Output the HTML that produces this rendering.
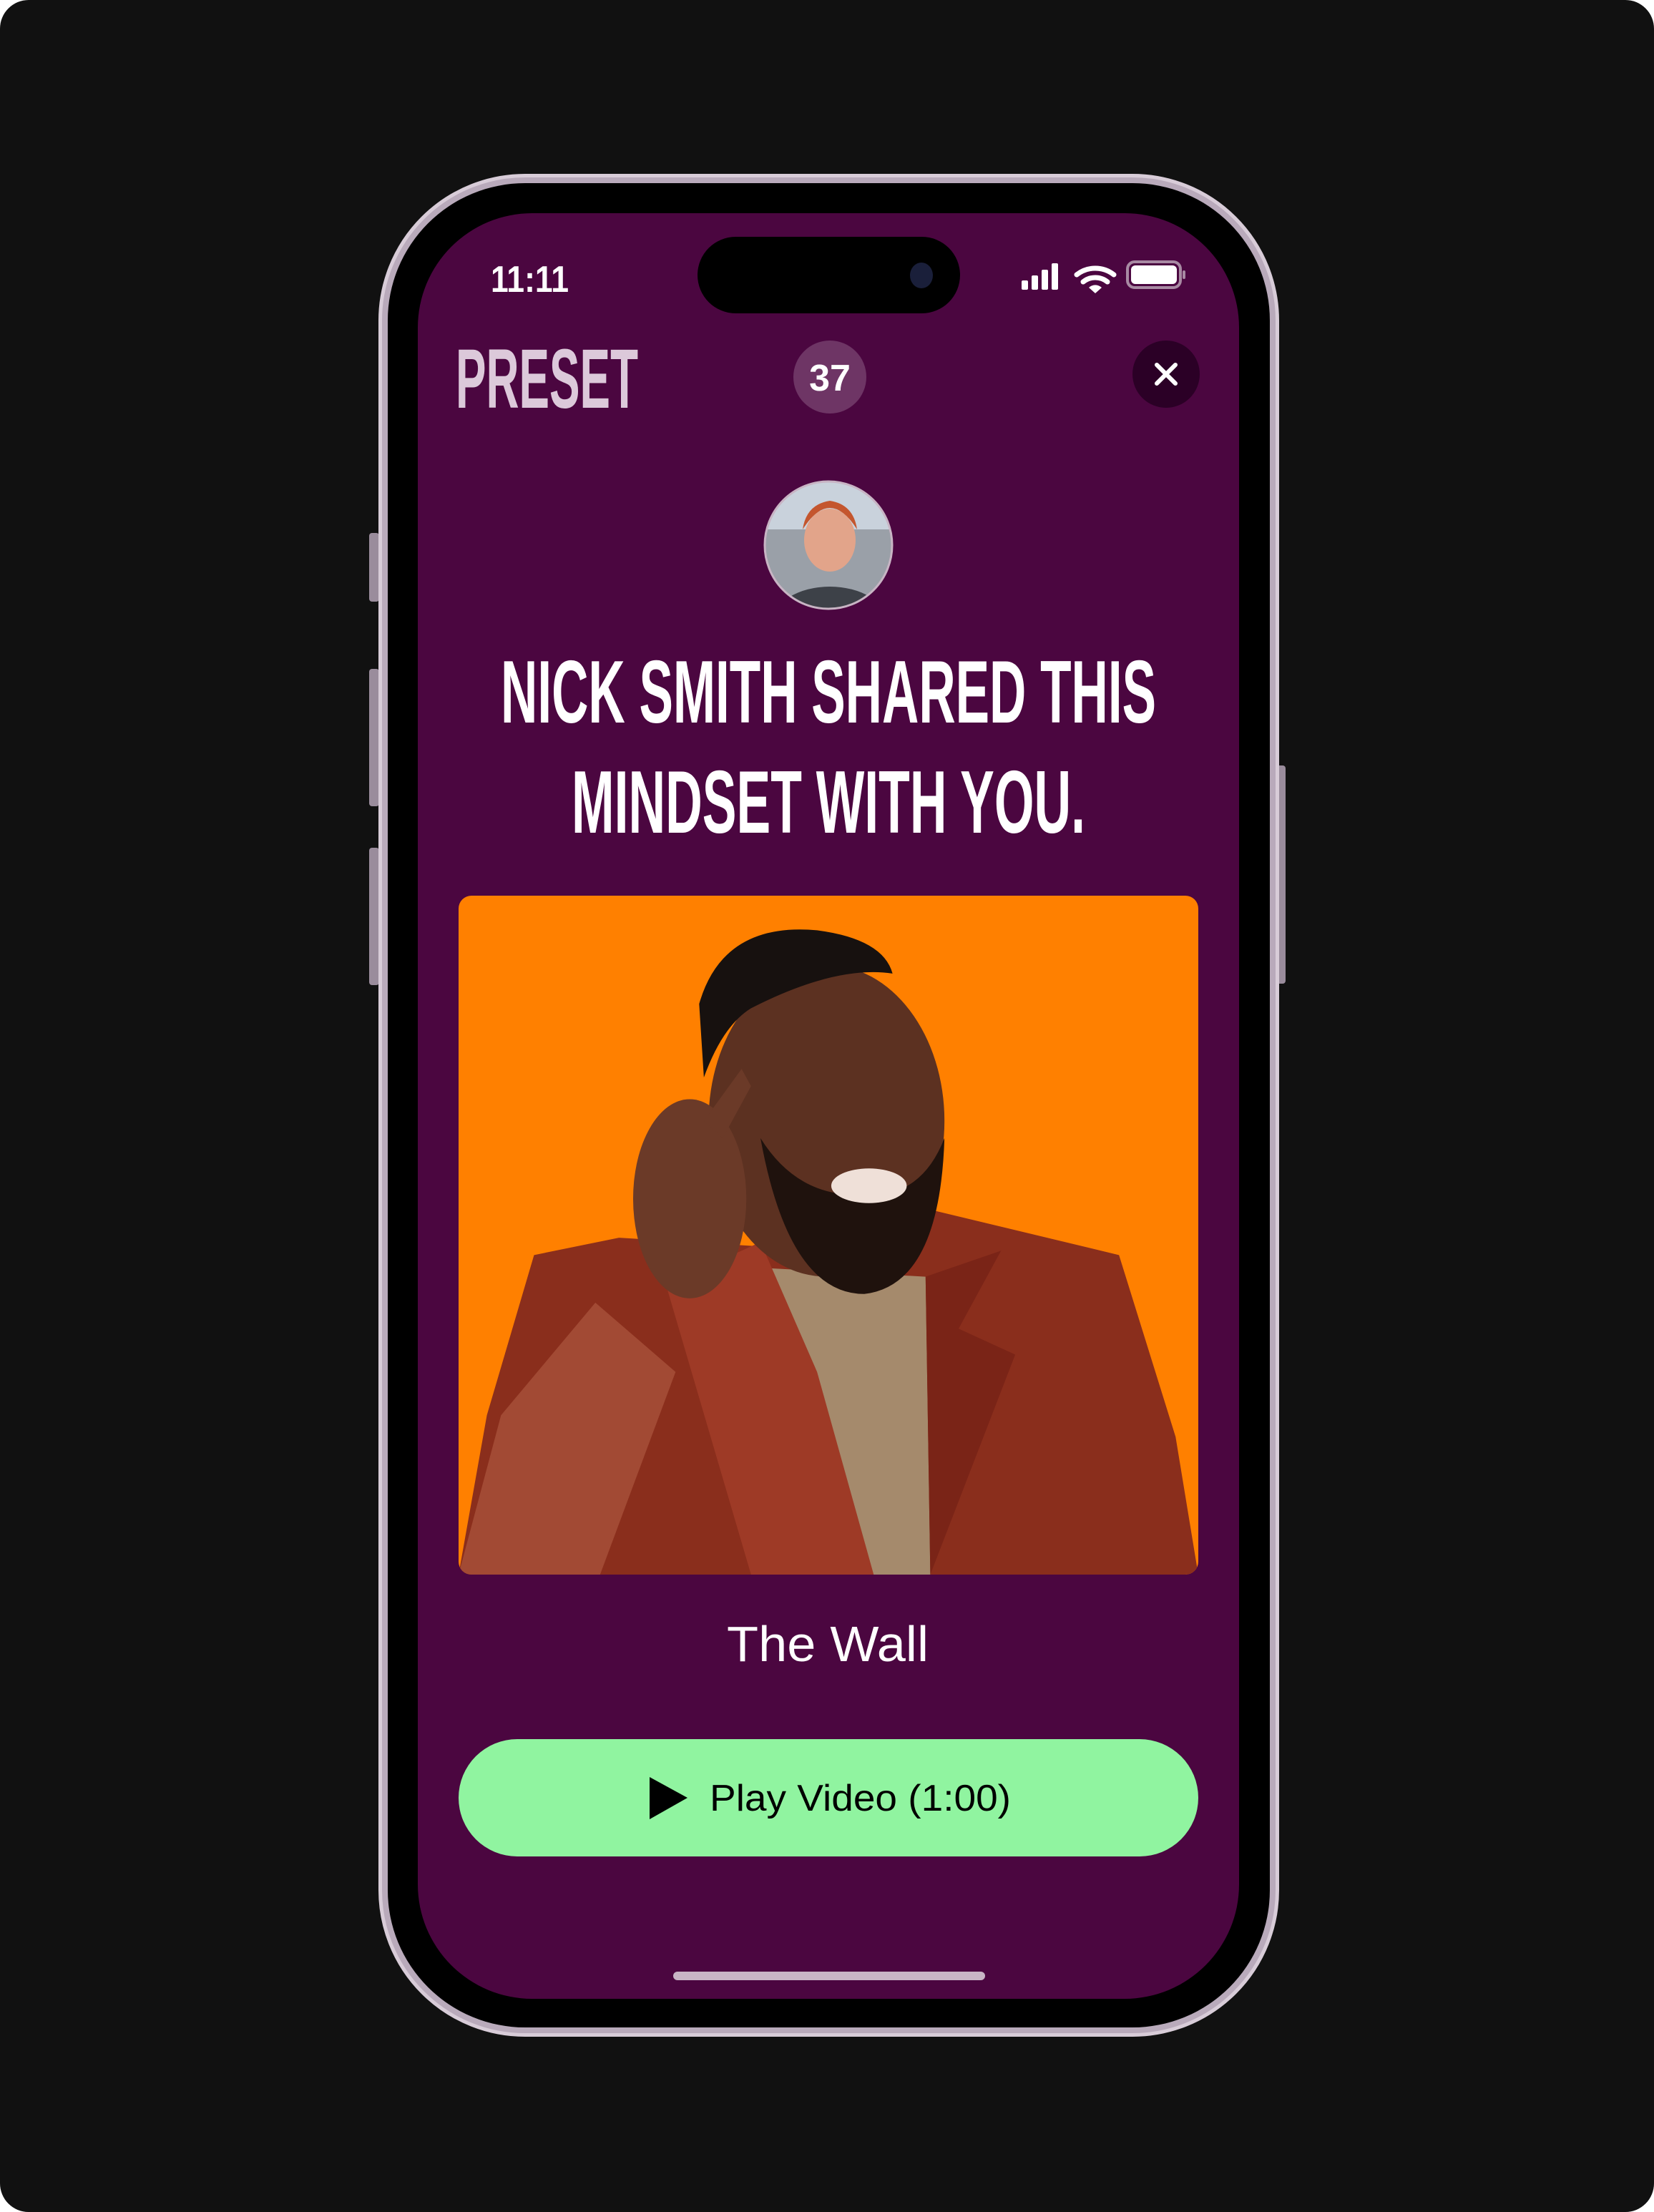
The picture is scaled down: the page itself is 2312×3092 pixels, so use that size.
<!DOCTYPE html>
<html><head><meta charset="utf-8"><style>
*{margin:0;padding:0;box-sizing:border-box}
html,body{width:2312px;height:3092px;background:#fff;overflow:hidden}
.bg{position:absolute;left:0;top:0;width:2312px;height:3092px;background:#111;border-radius:40px}
.abs{position:absolute}
</style></head><body>
<div class="bg"></div>
<!-- side buttons -->
<div class="abs" style="left:516px;top:745px;width:14px;height:96px;background:#9a8c9c;border-radius:4px"></div>
<div class="abs" style="left:516px;top:935px;width:14px;height:192px;background:#9a8c9c;border-radius:4px"></div>
<div class="abs" style="left:516px;top:1185px;width:14px;height:192px;background:#9a8c9c;border-radius:4px"></div>
<div class="abs" style="left:1783px;top:1070px;width:14px;height:305px;background:#9a8c9c;border-radius:4px"></div>
<!-- frame -->
<div class="abs" style="left:529px;top:243px;width:1259px;height:2604px;border-radius:205px;background:#b9aabb;border:5px solid #d8ccd8"></div>
<div class="abs" style="left:542px;top:256px;width:1233px;height:2578px;border-radius:192px;background:#000"></div>
<!-- screen -->
<div class="abs" style="left:584px;top:298px;width:1148px;height:2496px;border-radius:160px;background:#4b0640;overflow:hidden">
</div>
<!-- dynamic island -->
<div class="abs" style="left:975px;top:331px;width:367px;height:107px;border-radius:54px;background:#000"></div>
<div class="abs" style="left:1272px;top:367px;width:32px;height:36px;border-radius:50%;background:#1a1f3a"></div>
<svg class="abs" style="left:0;top:0" width="2312" height="3092">
<text x="686" y="408" font-family="Liberation Sans, sans-serif" font-weight="bold" font-size="52" fill="#fff" textLength="109" lengthAdjust="spacingAndGlyphs">11:11</text>
<!-- signal -->
<rect x="1428" y="392" width="9" height="13" rx="2" fill="#fff"/>
<rect x="1442" y="385" width="9" height="20" rx="2" fill="#fff"/>
<rect x="1456" y="377" width="9" height="28" rx="2" fill="#fff"/>
<rect x="1470" y="368" width="9" height="37" rx="2" fill="#fff"/>
<!-- wifi -->
<path d="M1505 384 a42 42 0 0 1 52 0" stroke="#fff" stroke-width="7" fill="none" stroke-linecap="round"/>
<path d="M1514 394 a27 27 0 0 1 34 0" stroke="#fff" stroke-width="7" fill="none" stroke-linecap="round"/>
<path d="M1522 402 L1531 410 L1540 402 a13 13 0 0 0 -18 0z" fill="#fff"/>
<!-- battery -->
<rect x="1576" y="366" width="74" height="36" rx="10" fill="none" stroke="#a88aa3" stroke-width="4"/>
<rect x="1581" y="371" width="64" height="26" rx="6" fill="#fff"/>
<rect x="1653" y="378" width="4" height="12" rx="2" fill="#a88aa3"/>
<!-- PRESET -->
<text x="637" y="570" font-family="Liberation Sans, sans-serif" font-weight="bold" font-size="118" fill="#dcc9da" textLength="255" lengthAdjust="spacingAndGlyphs">PRESET</text>
<circle cx="1160" cy="527" r="51" fill="#6e3565"/>
<text x="1160" y="546" text-anchor="middle" font-family="Liberation Sans, sans-serif" font-weight="bold" font-size="52" fill="#fff">37</text>
<circle cx="1630" cy="523" r="47" fill="#2b0026"/>
<path d="M1617 510 L1643 536 M1643 510 L1617 536" stroke="#fff" stroke-width="6" stroke-linecap="round"/>
<!-- avatar -->
<defs><clipPath id="av"><circle cx="1158" cy="762" r="89"/></clipPath>
<clipPath id="ph"><rect x="641" y="1252" width="1034" height="949" rx="18"/></clipPath></defs>
<g clip-path="url(#av)">
<rect x="1060" y="670" width="200" height="200" fill="#9aa0a8"/>
<rect x="1060" y="670" width="200" height="70" fill="#c9d2dc"/>
<ellipse cx="1160" cy="870" rx="80" ry="50" fill="#3d4148"/>
<ellipse cx="1160" cy="755" rx="36" ry="44" fill="#e2a48a"/>
<path d="M1122 740 q38 -60 76 0 q-5 -35 -38 -40 q-33 5 -38 40z" fill="#c4562e"/>
</g>
<circle cx="1158" cy="762" r="89" fill="none" stroke="#c8b4c4" stroke-width="3"/>
<!-- heading -->
<text x="1158" y="1010" text-anchor="middle" font-family="Liberation Sans, sans-serif" font-weight="bold" font-size="124" fill="#fff" textLength="916" lengthAdjust="spacingAndGlyphs">NICK SMITH SHARED THIS</text>
<text x="1158" y="1164" text-anchor="middle" font-family="Liberation Sans, sans-serif" font-weight="bold" font-size="124" fill="#fff" textLength="718" lengthAdjust="spacingAndGlyphs">MINDSET WITH YOU.</text>
<!-- photo -->
<g clip-path="url(#ph)">
<rect x="641" y="1252" width="1034" height="949" fill="#ff8000"/>
<g transform="translate(641 1252) scale(0.6594 0.6052)">
<path d="M0 1568 L60 1200 L160 830 L340 790 L640 810 L980 720 L1400 830 L1520 1250 L1568 1568z" fill="#8a2e1c"/>
<path d="M650 860 L990 880 L1000 1568 L780 1568z" fill="#a58a6c"/>
<path d="M440 900 L640 800 L760 1100 L880 1568 L620 1568z" fill="#9e3a26"/>
<path d="M990 880 L1150 820 L1060 1000 L1180 1060 L1000 1568z" fill="#7a2417"/>
<ellipse cx="780" cy="520" rx="250" ry="360" fill="#5c3121"/>
<path d="M640 560 Q700 920 860 920 Q1020 900 1030 560 Q980 700 860 690 Q720 700 640 560z" fill="#1f120d"/>
<path d="M510 250 Q560 60 760 80 Q900 100 920 180 Q800 160 620 260 Q560 300 520 420z" fill="#17110f"/>
<ellipse cx="870" cy="670" rx="80" ry="40" fill="#efe0d8"/>
<path d="M290 940 L460 1100 L300 1568 L0 1568 L90 1200z" fill="#a24a34"/>
<ellipse cx="490" cy="700" rx="120" ry="230" fill="#6b3a28"/>
<path d="M520 520 L600 400 L620 440 L560 560z" fill="#6b3a28"/>
</g>
</g>
<!-- title -->
<text x="1157" y="2322" text-anchor="middle" font-family="Liberation Sans, sans-serif" font-size="70" fill="#fff" textLength="282" lengthAdjust="spacingAndGlyphs">The Wall</text>
<!-- button -->
<rect x="641" y="2431" width="1034" height="164" rx="82" fill="#90f4a0"/>
<path d="M908 2484 L961 2513 L908 2543z" fill="#000"/>
<text x="992" y="2531" font-family="Liberation Sans, sans-serif" font-size="52" fill="#000" textLength="421" lengthAdjust="spacingAndGlyphs">Play Video (1:00)</text>
<!-- home indicator -->
<rect x="941" y="2756" width="436" height="12" rx="6" fill="#c9b5c6"/>
</svg>
</body></html>
